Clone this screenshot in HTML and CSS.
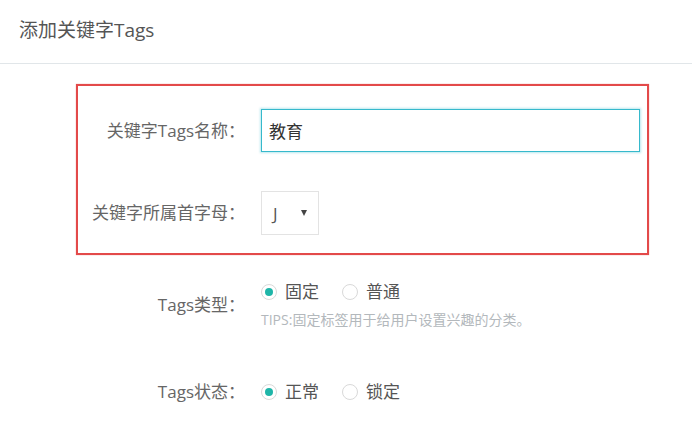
FILE: index.html
```html
<!DOCTYPE html>
<html lang="zh-CN">
<head>
    <meta charset="UTF-8">
    <title>添加关键字Tags</title>
    <link rel="stylesheet" href="styles.css">
</head>
<body>
<header class="page-header">
    <h1>添加关键字Tags</h1>
</header>
<form class="tag-form">
    <div class="highlight">
        <div class="form-row first">
            <label class="label" for="tag-name">关键字Tags名称：</label>
            <input id="tag-name" class="text-input" type="text" value="教育">
        </div>
        <div class="form-row second">
            <span class="label">关键字所属首字母：</span>
            <div class="select">
                <span>J</span>
                <span class="caret"></span>
            </div>
        </div>
    </div>
    <div class="form-row type-row">
        <span class="label">Tags类型：</span>
        <div class="field">
            <div class="radios">
                <span class="radio checked"></span><span class="radio-text">固定</span>
                <span class="radio"></span><span class="radio-text">普通</span>
            </div>
            <p class="tips">TIPS:固定标签用于给用户设置兴趣的分类。</p>
        </div>
    </div>
    <div class="form-row state-row">
        <span class="label">Tags状态：</span>
        <div class="radios">
            <span class="radio checked"></span><span class="radio-text">正常</span>
            <span class="radio"></span><span class="radio-text">锁定</span>
        </div>
    </div>
</form>
</body>
</html>
```

FILE: styles.css
```css
body {
    margin: 0;
    background-color: #fff;
    font-family: 'Open Sans', 'Noto Sans CJK SC', sans-serif;
    color: #666;
}

.page-header {
    box-sizing: border-box;
    height: 64px;
    padding: 0 0 3px 19px;
    border-bottom: 1px solid #e1e6e9;
    display: flex;
    align-items: center;
}

.page-header h1 {
    margin: 0;
    font-size: 19px;
    font-weight: normal;
    line-height: 24px;
    color: #555;
}

.tag-form {
    padding: 20px 0 0 78px;
}

.highlight {
    margin-left: -2px;
    width: 569px;
    border: 2px solid #e34a4a;
    box-shadow: 0 0 1px rgba(227, 74, 74, 0.6);
    padding: 23px 0 18px;
}

.form-row {
    display: flex;
    align-items: center;
}

.form-row.second {
    margin-top: 39px;
}

.label {
    width: 167px;
    padding-right: 16px;
    text-align: right;
    font-size: 17px;
    line-height: 24px;
    color: #666;
    white-space: nowrap;
}

.text-input {
    box-sizing: border-box;
    width: 379px;
    height: 43px;
    margin: 0;
    padding: 0 7px;
    border: 1px solid #36b9cc;
    box-shadow: 0 0 2px 1px rgba(54, 185, 204, 0.35);
    background-color: #fff;
    font-family: inherit;
    font-size: 17px;
    color: #333;
    outline: none;
}

.select {
    box-sizing: border-box;
    width: 58px;
    height: 44px;
    padding: 0 11px;
    border: 1px solid #e3e3e3;
    display: flex;
    align-items: center;
    justify-content: space-between;
    font-size: 17px;
    color: #555;
}

.caret {
    width: 0;
    height: 0;
    border-left: 3px solid transparent;
    border-right: 3px solid transparent;
    border-top: 6px solid #444;
}

.type-row {
    margin-top: 25px;
}

.state-row {
    margin-top: 50px;
}

.radios {
    display: flex;
    align-items: center;
    height: 24px;
}

.radio {
    width: 14px;
    height: 14px;
    border: 1px solid #d9d9d9;
    border-radius: 50%;
    display: flex;
    align-items: center;
    justify-content: center;
}

.radio.checked::after {
    content: "";
    width: 8px;
    height: 8px;
    border-radius: 50%;
    background-color: #1fb5a8;
}

.radio-text {
    margin-left: 8px;
    margin-right: 23px;
    font-size: 17px;
    line-height: 24px;
    color: #555;
}

.tips {
    margin: 6px 0 0;
    font-size: 14px;
    line-height: 20px;
    color: #b3b8bc;
}
```
